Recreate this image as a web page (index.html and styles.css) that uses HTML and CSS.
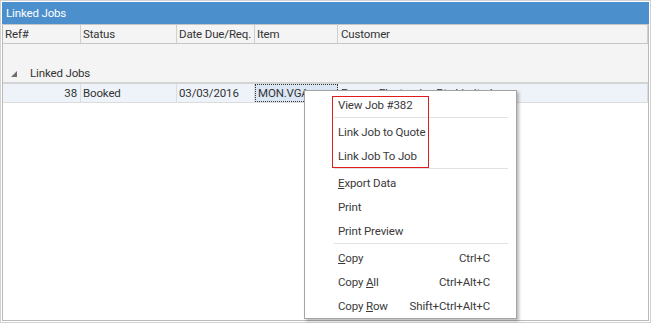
FILE: index.html
```html
<!DOCTYPE html>
<html>

<head>
    <meta charset="utf-8">
    <title>Linked Jobs</title>
    <link rel="stylesheet" href="styles.css">
</head>

<body>
    <div class="frame">
        <div class="title">Linked Jobs</div>
        <div class="grid">
            <div class="row head">
                <div class="cell c-ref">Ref#</div>
                <div class="cell c-status">Status</div>
                <div class="cell c-date">Date Due/Req.</div>
                <div class="cell c-item">Item</div>
                <div class="cell c-cust">Customer</div>
            </div>
            <div class="groupzone">
                <div class="group">
                    <svg class="caret" width="6" height="6" viewBox="0 0 6 6"><polygon points="6,0 6,6 0,6" fill="#6e6e6e"/></svg>
                    <span>Linked Jobs</span>
                </div>
            </div>
            <div class="row data">
                <div class="cell c-ref num">38</div>
                <div class="cell c-status">Booked</div>
                <div class="cell c-date">03/03/2016</div>
                <div class="cell c-item focus">MON.VGA</div>
                <div class="cell c-cust">Europa Electronics Pty Limited</div>
            </div>
            <div class="empty"></div>
        </div>

        <div class="menu">
            <div class="mi">View Job #382</div>
            <div class="sep"></div>
            <div class="mi">Link Job to Quote</div>
            <div class="mi">Link Job To Job</div>
            <div class="sep"></div>
            <div class="mi"><span><u>E</u>xport Data</span></div>
            <div class="mi">Print</div>
            <div class="mi">Print Preview</div>
            <div class="sep"></div>
            <div class="mi"><span><u>C</u>opy</span><span class="key">Ctrl+C</span></div>
            <div class="mi"><span>Copy <u>A</u>ll</span><span class="key">Ctrl+Alt+C</span></div>
            <div class="mi"><span>Copy <u>R</u>ow</span><span class="key">Shift+Ctrl+Alt+C</span></div>
        </div>
        <div class="mark"></div>
    </div>
</body>

</html>
```

FILE: styles.css
```css
* {
    margin: 0;
    padding: 0;
    box-sizing: border-box;
}

body {
    width: 651px;
    height: 323px;
    overflow: hidden;
    background: #ffffff;
    font-family: Roboto, "Noto Sans", sans-serif;
    font-size: 11.5px;
    letter-spacing: -0.15px;
    color: #333333;
}

.frame {
    position: relative;
    width: 651px;
    height: 323px;
    border: 1px solid #d2d2d2;
    padding: 1px;
    display: flex;
    flex-direction: column;
}

.title {
    height: 23px;
    line-height: 22px;
    padding-left: 4px;
    background: #4c8fcd;
    color: #ffffff;
    border-bottom: 1px solid #c6c6c6;
}

.grid {
    flex: 1;
    display: flex;
    flex-direction: column;
    border-left: 1px solid #b9b9b9;
    border-right: 1px solid #b9b9b9;
    border-bottom: 1px solid #b9b9b9;
}

.row {
    display: flex;
}

.cell {
    padding-left: 2px;
    border-right: 1px solid #d4d4d4;
    white-space: nowrap;
    overflow: hidden;
}

.c-ref { width: 78px; }
.c-status { width: 96px; }
.c-date { width: 78px; }
.c-item { width: 83px; }
.c-cust { flex: 1; padding-left: 3px; }

.head {
    height: 19px;
    line-height: 19px;
    background: #f4f4f4;
    border-bottom: 1px solid #c8c8c8;
}

.head .cell {
    border-right-color: #cfcfcf;
}

.groupzone {
    height: 40px;
    background: #f4f4f4;
    border-bottom: 2px solid #d4d4d4;
    display: flex;
    align-items: flex-end;
}

.group {
    height: 18px;
    display: flex;
    align-items: center;
    padding-left: 8px;
}

.caret {
    margin-right: 13px;
    margin-top: 2px;
}

.data {
    height: 19px;
    line-height: 18px;
    background: #eef3fa;
    border-bottom: 1px solid #dcdcdc;
}

.data .cell {
    border-right-color: #dcdcdc;
}

.num {
    text-align: right;
    padding-right: 3px;
}

.focus {
    background: #dce7f5;
    outline: 1px dotted #333333;
    outline-offset: -1px;
    padding-left: 3px;
}

.empty {
    flex: 1;
}

.menu {
    position: absolute;
    left: 303px;
    top: 89px;
    width: 213px;
    background: #ffffff;
    border: 1px solid #a4a4a4;
    box-shadow: 2px 2px 3px rgba(0, 0, 0, 0.28);
    padding: 1px 0;
    color: #3a3a3a;
}

.mi {
    height: 24px;
    line-height: 26px;
    padding-left: 33px;
    padding-right: 26px;
    display: flex;
    justify-content: space-between;
}

.sep {
    margin: 1px 8px 0 29px;
    height: 2px;
    border-top: 1px solid #e2e2e2;
}

.mark {
    position: absolute;
    left: 331px;
    top: 95px;
    width: 97px;
    height: 72px;
    border: 1px solid #e21b1b;
}
```
